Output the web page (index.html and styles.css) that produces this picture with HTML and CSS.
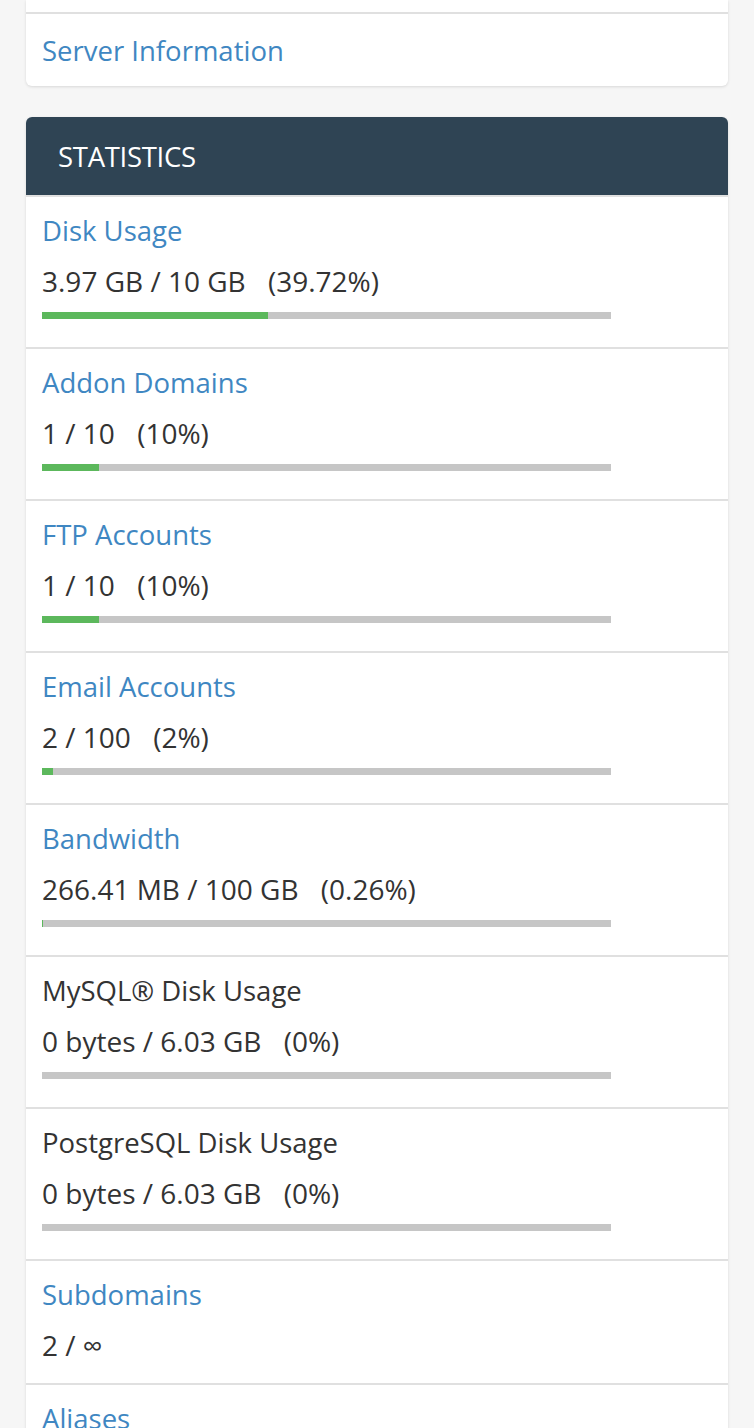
FILE: index.html
```html
<!DOCTYPE html>
<html>
<head>
<meta charset="utf-8">
<link rel="stylesheet" href="styles.css">
</head>
<body>
<div class="page">
  <div class="card card-top">
    <div class="top-stub"></div>
    <div class="top-row"><a class="link" href="#">Server Information</a></div>
  </div>

  <div class="card card-stats">
    <div class="stats-head">STATISTICS</div>

    <div class="stat">
      <a class="link stat-title" href="#">Disk Usage</a>
      <div class="stat-value">3.97 GB / 10 GB <span class="pct">(39.72%)</span></div>
      <div class="bar"><div class="fill" style="width:39.72%"></div></div>
    </div>

    <div class="stat">
      <a class="link stat-title" href="#">Addon Domains</a>
      <div class="stat-value">1 / 10 <span class="pct">(10%)</span></div>
      <div class="bar"><div class="fill" style="width:10%"></div></div>
    </div>

    <div class="stat">
      <a class="link stat-title" href="#">FTP Accounts</a>
      <div class="stat-value">1 / 10 <span class="pct">(10%)</span></div>
      <div class="bar"><div class="fill" style="width:10%"></div></div>
    </div>

    <div class="stat">
      <a class="link stat-title" href="#">Email Accounts</a>
      <div class="stat-value">2 / 100 <span class="pct">(2%)</span></div>
      <div class="bar"><div class="fill" style="width:2%"></div></div>
    </div>

    <div class="stat">
      <a class="link stat-title" href="#">Bandwidth</a>
      <div class="stat-value">266.41 MB / 100 GB <span class="pct">(0.26%)</span></div>
      <div class="bar"><div class="fill" style="width:0.26%"></div></div>
    </div>

    <div class="stat">
      <div class="stat-title plain">MySQL® Disk Usage</div>
      <div class="stat-value">0 bytes / 6.03 GB <span class="pct">(0%)</span></div>
      <div class="bar"><div class="fill" style="width:0%"></div></div>
    </div>

    <div class="stat">
      <div class="stat-title plain">PostgreSQL Disk Usage</div>
      <div class="stat-value">0 bytes / 6.03 GB <span class="pct">(0%)</span></div>
      <div class="bar"><div class="fill" style="width:0%"></div></div>
    </div>

    <div class="stat stat-nobar">
      <a class="link stat-title" href="#">Subdomains</a>
      <div class="stat-value">2 / ∞</div>
    </div>

    <div class="stat">
      <a class="link stat-title" href="#">Aliases</a>
      <div class="stat-value">0 / ∞</div>
    </div>
  </div>
</div>
</body>
</html>
```

FILE: styles.css
```css
* { box-sizing: border-box; }

html, body {
  margin: 0;
  padding: 0;
  background: #f6f6f6;
  font-family: "Open Sans", "Liberation Sans", sans-serif;
  color: #333;
  overflow: hidden;
}

.page {
  padding: 0 26px;
  display: flex;
  flex-direction: column;
  gap: 31px;
}

.card {
  background: #fff;
  border-radius: 6px;
  box-shadow: 0 1px 3px rgba(0,0,0,0.12);
  overflow: hidden;
}

.card-top {
  border-top-left-radius: 0;
  border-top-right-radius: 0;
}

.top-stub {
  height: 14px;
  border-bottom: 2px solid #e0e0e0;
}

.top-row {
  padding: 19px 16px 17px;
  font-size: 27.5px;
  line-height: 36px;
  height: 72px;
}

.link {
  color: #3f87c2;
  text-decoration: none;
}

.stats-head {
  background: #2f4454;
  color: #fff;
  height: 78px;
  padding: 0 32px;
  display: flex;
  align-items: center;
  font-size: 27.5px;
  letter-spacing: -0.3px;
}

.stat {
  padding: 16px 16px 28px;
  border-top: 2px solid #e0e0e0;
  display: flex;
  flex-direction: column;
}

.stat:first-of-type { border-top: none; }

.stat-nobar { padding-bottom: 20px; }

.stat-title {
  display: block;
  font-size: 27.5px;
  line-height: 36px;
}

.stat-title.plain { color: #333; }

.stat-value {
  margin-top: 14px;
  font-size: 28px;
  line-height: 36px;
  color: #333;
  white-space: pre;
}

.pct { margin-left: 15px; }

.bar {
  margin-top: 13px;
  width: 569px;
  height: 7px;
  background: #c6c6c6;
}

.fill {
  height: 100%;
  background: #5cb85c;
}
```
